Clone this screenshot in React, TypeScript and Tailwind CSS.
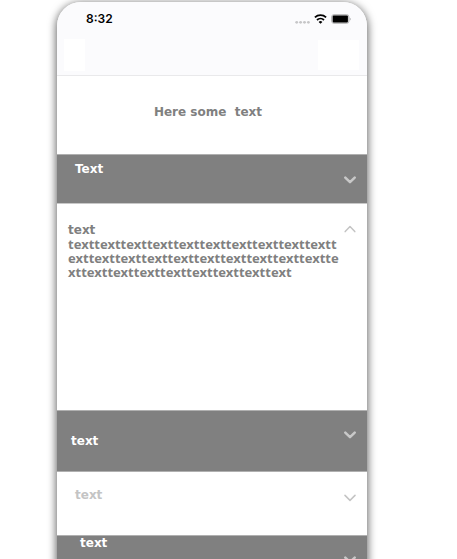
import { useState } from "react";
import clsx from "clsx";

interface Section {
  id: string;
  title: string;
  dark: boolean;
  row: string;
  chevron: string;
}

const sections: Section[] = [
  { id: "first", title: "Text", dark: true, row: "h-[49px] pt-[7px] pl-[18px]", chevron: "mt-3.5" },
  { id: "second", title: "text", dark: true, row: "h-[61px] pt-[23px] pl-[14px]", chevron: "-mt-[3px]" },
  { id: "third", title: "text", dark: false, row: "h-[64px] pt-4 pl-[18px]", chevron: "mt-1.5" },
  { id: "fourth", title: "text", dark: true, row: "h-[61px] pt-0 pl-[23px]", chevron: "mt-5" },
];

function Chevron({ up = false, bold = false, className = "" }: { up?: boolean; bold?: boolean; className?: string }) {
  return (
    <svg
      viewBox="0 0 12 8"
      className={clsx("h-2 w-3 shrink-0", className)}
      fill="none"
      stroke={bold ? "#c8c8c8" : "#c4c4c4"}
      strokeWidth={bold ? 2.5 : 1.5}
      strokeLinecap="round"
      strokeLinejoin="round"
      aria-hidden="true"
    >
      <path d={up ? "M1.2 6.6 6 1.6l4.8 5" : bold ? "M1.3 1.6 6 6.2l4.7-4.6" : "M1 1.4 6 6.4l5-5"} />
    </svg>
  );
}

function StatusBar() {
  return (
    <div className="flex h-[34px] items-center justify-between pr-4 pl-[29px]">
      <span className="font-['Inter',sans-serif] text-[12px] leading-4 font-semibold text-black">8:32</span>
      <div className="flex items-center gap-1">
        <svg viewBox="0 0 15 10" className="h-[10px] w-[15px]" fill="#c6c6c8" aria-hidden="true">
          <circle cx="1.7" cy="8.3" r="1.4" />
          <circle cx="5.6" cy="8.3" r="1.4" />
          <circle cx="9.5" cy="8.3" r="1.4" />
          <circle cx="13.4" cy="8.3" r="1.4" />
        </svg>
        <svg viewBox="0 0 13 10" className="h-[10px] w-[13px]" fill="none" stroke="#000" strokeWidth="1.8" aria-hidden="true">
          <path d="M0.9 3.4a8.2 8.2 0 0 1 11.2 0" />
          <path d="M3 6a5.2 5.2 0 0 1 7 0" />
          <path d="M6.5 9.8 4.6 7.9a2.8 2.8 0 0 1 3.8 0Z" fill="#000" stroke="none" />
        </svg>
        <svg viewBox="0 0 20 10" className="h-[10px] w-[20px]" aria-hidden="true">
          <rect x="0.6" y="0.6" width="17.4" height="8.8" rx="2.4" fill="#d6d6d8" stroke="#b4b4b6" strokeWidth="0.9" />
          <rect x="1.7" y="1.5" width="15.2" height="7" rx="1" fill="#000" />
          <path d="M18.8 3.4v3.2q0.9-.5 0.9-1.6t-0.9-1.6Z" fill="#a8a8aa" />
        </svg>
      </div>
    </div>
  );
}

export default function App() {
  const [open, setOpen] = useState<string | null>("first");

  const toggle = (id: string) => setOpen(open === id ? null : id);

  return (
    <div className="h-screen overflow-hidden bg-white pt-[2px] pr-[90px] pl-[57px] font-['DejaVu_Sans',Verdana,sans-serif] text-[12px] leading-[14px] font-bold">
      <main className="min-h-full overflow-hidden rounded-t-[24px] bg-white shadow-[0_2px_8px_1px_rgba(0,0,0,0.6)]">
        <header className="h-[74px] border-b border-[#e9e9eb] bg-[#fbfbfd]">
          <StatusBar />
          <div className="flex items-center justify-between pt-[3px] pr-2 pl-[7px]">
            <button type="button" aria-label="Back" className="h-8 w-[21px] bg-white" />
            <button type="button" aria-label="Menu" className="h-[30px] w-[41px] bg-white" />
          </div>
        </header>

        <h1 className="flex h-[78px] justify-center pt-[29px] pr-2 whitespace-pre text-[#808080]">
          Here some  text
        </h1>

        {sections.map((s) => (
          <section key={s.id}>
            <h2>
              <button
                type="button"
                onClick={() => toggle(s.id)}
                aria-expanded={open === s.id}
                className={clsx(
                  "flex w-full items-start justify-between border-t border-[#b0b0b0] pr-[11px] text-left",
                  s.row,
                  s.dark ? "bg-[#808080] text-white" : "bg-white text-[#c4c4c4]",
                )}
              >
                <span>{s.title}</span>
                <Chevron bold={s.dark} className={s.chevron} />
              </button>
            </h2>
            {open === s.id && (
              <div className="flex h-[207px] items-start justify-between border-t border-[#c8c8c8] pt-[19px] pr-[11px] pl-[11px] text-[#808080]">
                <div className="w-[273px]">
                  <p>text</p>
                  <p className="font-['Noto_Sans',sans-serif] text-[13px] break-all">{"text".repeat(29)}</p>
                </div>
                <Chevron up className="mt-[2px]" />
              </div>
            )}
          </section>
        ))}
      </main>
    </div>
  );
}
